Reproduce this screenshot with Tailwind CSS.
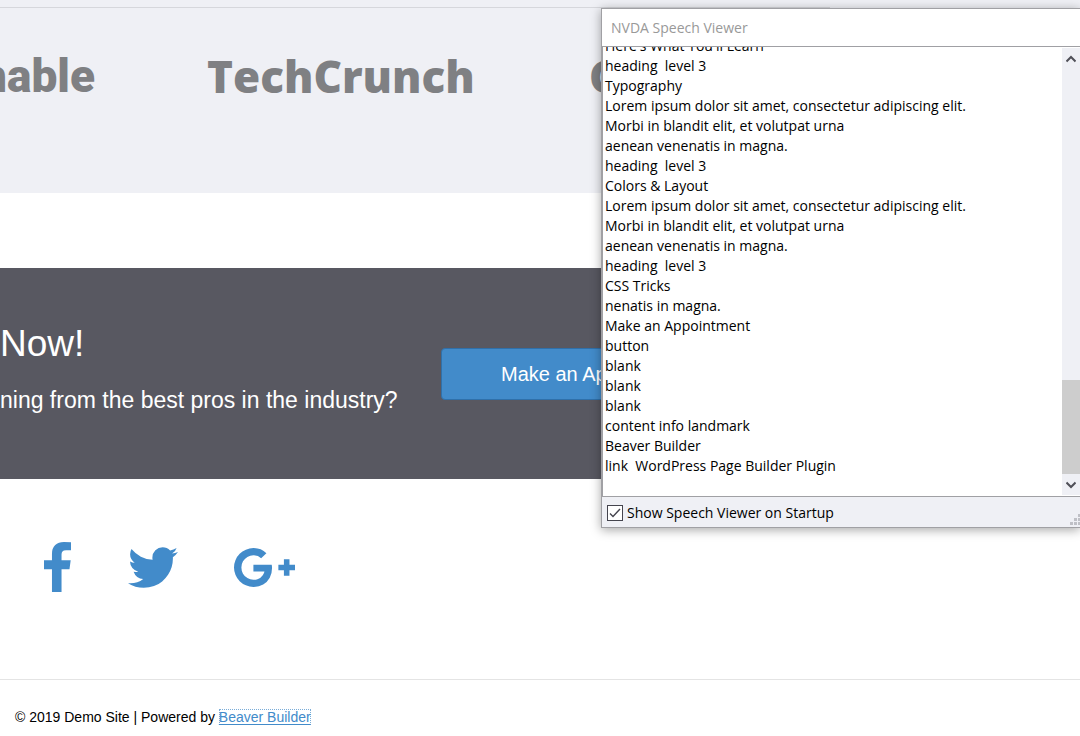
<!DOCTYPE html>
<html lang="en">
<head>
  <meta charset="UTF-8" />
  <meta name="viewport" content="width=device-width, initial-scale=1.0" />
  <title>Demo Site</title>
  <script src="https://cdn.jsdelivr.net/npm/@tailwindcss/browser@4"></script>
</head>
<body class="relative overflow-hidden bg-white font-['Liberation_Sans',sans-serif] text-black">
  <main>
    <!-- Press logos -->
    <section class="h-[193px] bg-[#eff0f5] pt-[7px]">
      <div class="h-px w-[830px] bg-[#d6d7dc]"></div>
      <div class="mt-9 flex h-16 items-center whitespace-nowrap font-['Open_Sans',sans-serif] text-[44px] leading-16 font-extrabold text-[#7f8083]">
        <div class="flex w-[95px] shrink-0 justify-end overflow-hidden font-['Roboto',sans-serif] text-[46px] font-black">Mashable</div>
        <div class="ml-28 w-[382px] shrink-0">TechCrunch</div>
        <div>Google</div>
      </div>
    </section>

    <!-- Call to action -->
    <section class="mt-[75px] flex h-[211px] items-center bg-[#585861] text-white">
      <div class="w-[441px] shrink-0 pb-3 whitespace-nowrap">
        <h2 class="text-[37px] leading-[48px]">Now!</h2>
        <p class="mt-4 text-[23px] leading-8">ning from the best pros in the industry?</p>
      </div>
      <button type="button" class="h-[52px] shrink-0 rounded border border-[#2f70aa] bg-[#428bca] px-[59px] text-xl">Make an Appointment</button>
    </section>

    <!-- Social -->
    <nav class="flex h-[200px] items-start pt-[63px] pl-11 text-[#428bca]">
      <a href="#" aria-label="Facebook" class="flex h-[50px] items-center">
        <svg class="h-[50px] w-[27px]" viewBox="479 0 864 1664" preserveAspectRatio="none" fill="currentColor"><path d="M1343 12v264h-157q-86 0-116 36t-30 108v189h293l-39 296h-254v759h-306v-759h-255v-296h255v-218q0-186 104-288.5t277-102.5q147 0 228 12z"/></svg>
      </a>
      <a href="#" aria-label="Twitter" class="ml-[57px] flex h-[50px] items-center">
        <svg class="h-[41px] w-[50px]" viewBox="108 256 1576 1280" fill="currentColor"><path d="M1684 408q-67 98-162 167 1 14 1 42 0 130-38 259.5t-115.5 248.5-184.5 210.5-258 146-323 54.5q-271 0-496-145 35 4 78 4 225 0 401-138-105-2-188-64.5t-114-159.5q33 5 61 5 43 0 85-11-112-23-185.5-111.5t-73.5-205.5v-4q68 38 146 41-66-44-105-115t-39-154q0-88 44-163 121 149 294.5 238.5t371.5 99.5q-8-38-8-74 0-134 94.5-228.5t228.5-94.5q140 0 236 102 109-21 205-78-37 115-142 178 93-10 186-50z"/></svg>
      </a>
      <a href="#" aria-label="Google Plus" class="ml-14 flex h-[50px] items-center">
        <svg class="h-[39px] w-[61px]" viewBox="0 163 2304 1466" fill="currentColor"><path d="M1437 913q0 208-87 370.5t-248 254-369 91.5q-149 0-285-58t-234-156-156-234-58-285 58-285 156-234 234-156 285-58q286 0 491 192l-199 191q-117-113-292-113-123 0-227.5 62t-165.5 168.5-61 232.5 61 232.5 165.5 168.5 227.5 62q83 0 152.5-23t114.5-57.5 78.5-78.5 49-83 21.5-74h-416v-252h692q12 63 12 122zm867-122v210h-209v209h-210v-209h-209v-210h209v-209h210v209h209z"/></svg>
      </a>
    </nav>
  </main>

  <footer class="border-t border-[#e4e4e4] px-[15px] pt-[27px] pb-2 text-sm leading-5">
    &copy; 2019 Demo Site | Powered by
    <a href="#" class="text-[#428bca] underline underline-offset-2 outline-1 -outline-offset-1 outline-dotted outline-[#428bca]/70">Beaver Builder</a>
  </footer>

  <!-- Speech viewer window, floats over the page -->
  <section class="absolute top-2 right-0 left-[601px] flex h-[520px] flex-col border-y border-l border-[#a0a0a4] bg-white font-['Open_Sans',sans-serif] text-sm shadow-[0_2px_10px_rgba(0,0,0,0.35)]">
    <h1 class="h-[37px] shrink-0 pl-[9px] leading-[37px] text-[#999999]">NVDA Speech Viewer</h1>
    <div class="flex min-h-0 flex-1 border-y border-l border-[#a0a0a4]">
      <textarea id="log" readonly aria-label="Speech log" class="block flex-1 resize-none overflow-hidden pl-[2px] leading-5 outline-none">Here's What You'll Learn
heading  level 3
Typography
Lorem ipsum dolor sit amet, consectetur adipiscing elit.
Morbi in blandit elit, et volutpat urna
aenean venenatis in magna.
heading  level 3
Colors &amp; Layout
Lorem ipsum dolor sit amet, consectetur adipiscing elit.
Morbi in blandit elit, et volutpat urna
aenean venenatis in magna.
heading  level 3
CSS Tricks
nenatis in magna.
Make an Appointment
button
blank
blank
blank
content info landmark
Beaver Builder
link  WordPress Page Builder Plugin
</textarea>
      <div class="my-px flex w-[18px] flex-col bg-[#eff0f5]">
        <button type="button" aria-label="Scroll up" class="flex h-[21px] items-center justify-center text-[#505058]">
          <svg class="h-2 w-[10px]" viewBox="0 0 10 8" fill="none" stroke="currentColor" stroke-width="2"><path d="M.5 6.500l4.500-4.500 4.500 4.500"/></svg>
        </button>
        <div class="flex-1"></div>
        <div class="h-[94px] bg-[#cdcdcd]"></div>
        <button type="button" aria-label="Scroll down" class="flex h-[21px] items-center justify-center text-[#505058]">
          <svg class="h-2 w-[10px]" viewBox="0 0 10 8" fill="none" stroke="currentColor" stroke-width="2"><path d="M.5 1.500l4.500 4.500 4.500-4.500"/></svg>
        </button>
      </div>
    </div>
    <div class="flex h-[30px] shrink-0 items-center justify-between bg-[#eff0f5] pl-[5px]">
      <label class="flex items-center gap-1 pt-px">
        <span class="grid size-4">
          <input type="checkbox" checked class="peer col-start-1 row-start-1 size-4 appearance-none border border-[#44444e] bg-white" />
          <svg class="pointer-events-none invisible col-start-1 row-start-1 size-4 peer-checked:visible" viewBox="0 0 16 16" fill="none" stroke="#44444e" stroke-width="1.4"><path d="M3 8.500l3 3 7-7.500"/></svg>
        </span>
        Show Speech Viewer on Startup
      </label>
      <svg class="mb-[2px] h-[11px] w-[10px] self-end" viewBox="0 0 10 11" fill="#bfc0c6"><path d="M8 0h3v3h-3zM4 4h3v3h-3zM8 4h3v3h-3zM0 8h3v3h-3zM4 8h3v3h-3zM8 8h3v3h-3z"/></svg>
    </div>
  </section>

  <script>
    const log = document.getElementById("log");
    log.scrollTop = log.scrollHeight;
  </script>
</body>
</html>
